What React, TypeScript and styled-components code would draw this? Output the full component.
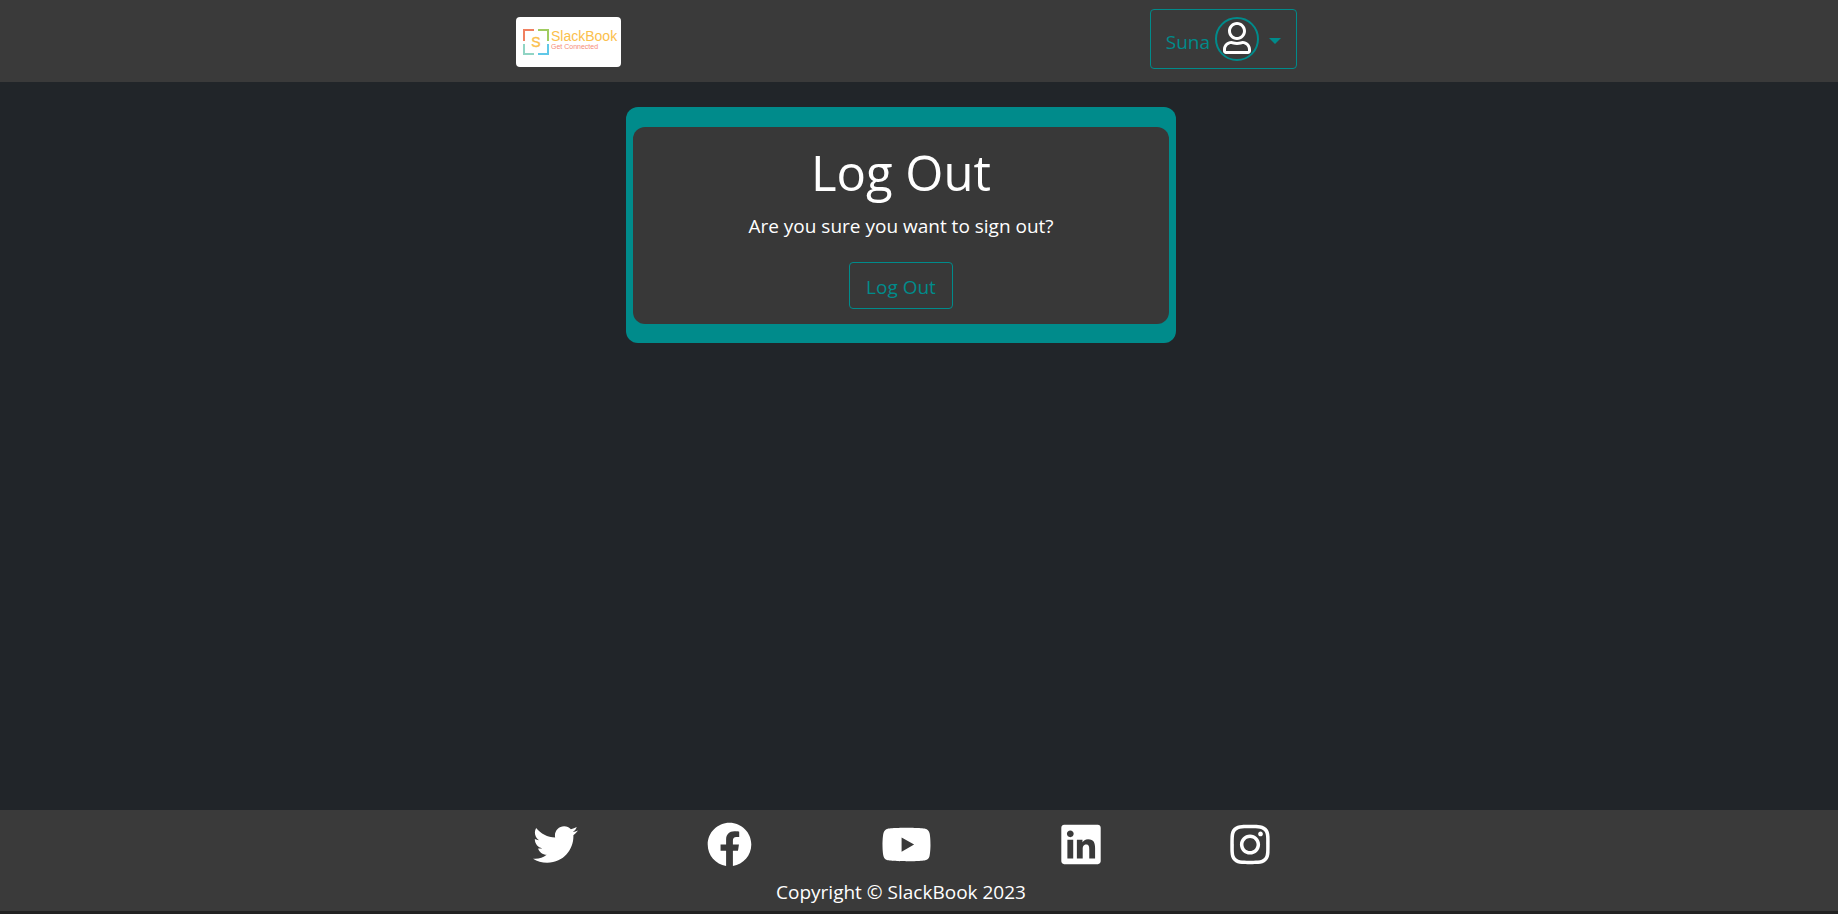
import React from "react";
import styled, { createGlobalStyle } from "styled-components";
import {
  FaFacebook,
  FaInstagram,
  FaLinkedin,
  FaRegUser,
  FaTwitter,
  FaYoutube,
} from "react-icons/fa";

const teal = "#008b8b";
const panel = "#3a3a3a";

const GlobalStyle = createGlobalStyle`
  *, *::before, *::after { box-sizing: border-box; }
  body {
    margin: 0;
    background: #212529;
    color: #fff;
    font-family: "Segoe UI", "Open Sans", "Noto Sans", sans-serif;
    font-size: 19px;
    line-height: 30px;
  }
`;

const Page = styled.div`
  display: flex;
  flex-direction: column;
  min-height: 100vh;
`;

const Header = styled.header`
  display: flex;
  justify-content: center;
  padding: 9px 25px 13px 0;
  background: ${panel};
`;

const Nav = styled.nav`
  display: flex;
  align-items: flex-start;
  justify-content: space-between;
  width: 100%;
  max-width: 781px;
`;

const Brand = styled.a`
  display: block;
  margin-top: 8px;
  border-radius: 4px;
  background: #fff;
  overflow: hidden;

  svg { display: block; }
`;

const OutlineButton = styled.button<{ $tall?: boolean }>`
  display: inline-flex;
  align-items: center;
  height: ${({ $tall }) => ($tall ? "60px" : "47px")};
  padding: ${({ $tall }) => ($tall ? "0 15px" : "2px 16px 0")};
  border: 1px solid ${teal};
  border-radius: 4px;
  background: transparent;
  color: ${teal};
  font: inherit;
  cursor: pointer;
`;

const UserName = styled.span`
  padding-top: 5px;
`;

const Avatar = styled.span`
  display: flex;
  justify-content: center;
  width: 44px;
  height: 44px;
  margin: 0 10px 0 5px;
  padding-top: 3px;
  border: 2px solid ${teal};
  border-radius: 50%;
  color: #fff;

  svg { flex: none; width: 28px; height: 32px; }
`;

const Caret = styled.span`
  margin-top: 4px;
  border: 6px solid transparent;
  border-top-color: ${teal};
  border-bottom: 0;
`;

const Main = styled.main`
  display: flex;
  flex: 1;
  align-items: flex-start;
  justify-content: center;
  padding: 25px 36px 25px 0;
`;

const Frame = styled.section`
  width: 100%;
  max-width: 550px;
  padding: 20px 7px 19px;
  border-radius: 12px;
  background: ${teal};
`;

const Card = styled.div`
  padding: 15px 16px;
  border-radius: 12px;
  background: #383838;
  text-align: center;
`;

const Title = styled.h1`
  margin: 0 0 9px;
  font-size: 49px;
  font-weight: 400;
  line-height: 60px;
`;

const Message = styled.p`
  margin: 0 0 21px;
`;

const Footer = styled.footer`
  display: flex;
  flex-direction: column;
  align-items: center;
  padding: 12px 36px 4px 0;
  border-bottom: 3px solid #222;
  background: ${panel};
`;

const Socials = styled.ul`
  display: flex;
  justify-content: space-around;
  width: 100%;
  max-width: 866px;
  margin: 0 0 10px;
  padding: 0;
  list-style: none;
`;

const SocialLink = styled.a<{ $width: number }>`
  display: block;
  color: #fff;

  svg {
    display: block;
    width: ${({ $width }) => $width}px;
    height: 45px;
  }
`;

const Copyright = styled.p`
  margin: 0;
`;

const socials = [
  { label: "Twitter", Icon: FaTwitter, width: 45 },
  { label: "Facebook", Icon: FaFacebook, width: 45 },
  { label: "YouTube", Icon: FaYoutube, width: 51 },
  { label: "LinkedIn", Icon: FaLinkedin, width: 40 },
  { label: "Instagram", Icon: FaInstagram, width: 40 },
];

const Logo = () => (
  <svg width="105" height="50" viewBox="0 0 105 50" role="img" aria-label="SlackBook">
    <g fill="none" strokeWidth="2">
      <path d="M8 24V13H18" stroke="#f08060" />
      <path d="M22 13H32V24" stroke="#a0cc60" />
      <path d="M8 27V37H18" stroke="#90d4c4" />
      <path d="M22 37H32V27" stroke="#60c8e8" />
    </g>
    <g fontFamily='"Liberation Sans", Arial, sans-serif'>
      <text x="20" y="30" textAnchor="middle" fontSize="14" fill="#fbc04c" stroke="#fbc04c" strokeWidth="0.4">S</text>
      <text x="35" y="24" fontSize="14" fill="#fbc04c">SlackBook</text>
      <text x="35" y="32" fontSize="7" fill="#f68c78">Get Connected</text>
    </g>
  </svg>
);

export default function App() {
  return (
    <Page>
      <GlobalStyle />
      <Header>
        <Nav>
          <Brand href="#">
            <Logo />
          </Brand>
          <OutlineButton type="button" $tall aria-haspopup="menu">
            <UserName>Suna</UserName>
            <Avatar>
              <FaRegUser />
            </Avatar>
            <Caret />
          </OutlineButton>
        </Nav>
      </Header>
      <Main>
        <Frame>
          <Card>
            <Title>Log Out</Title>
            <Message>Are you sure you want to sign out?</Message>
            <OutlineButton type="submit">Log Out</OutlineButton>
          </Card>
        </Frame>
      </Main>
      <Footer>
        <Socials>
          {socials.map(({ label, Icon, width }) => (
            <li key={label}>
              <SocialLink href="#" aria-label={label} $width={width}>
                <Icon />
              </SocialLink>
            </li>
          ))}
        </Socials>
        <Copyright>Copyright © SlackBook 2023</Copyright>
      </Footer>
    </Page>
  );
}
